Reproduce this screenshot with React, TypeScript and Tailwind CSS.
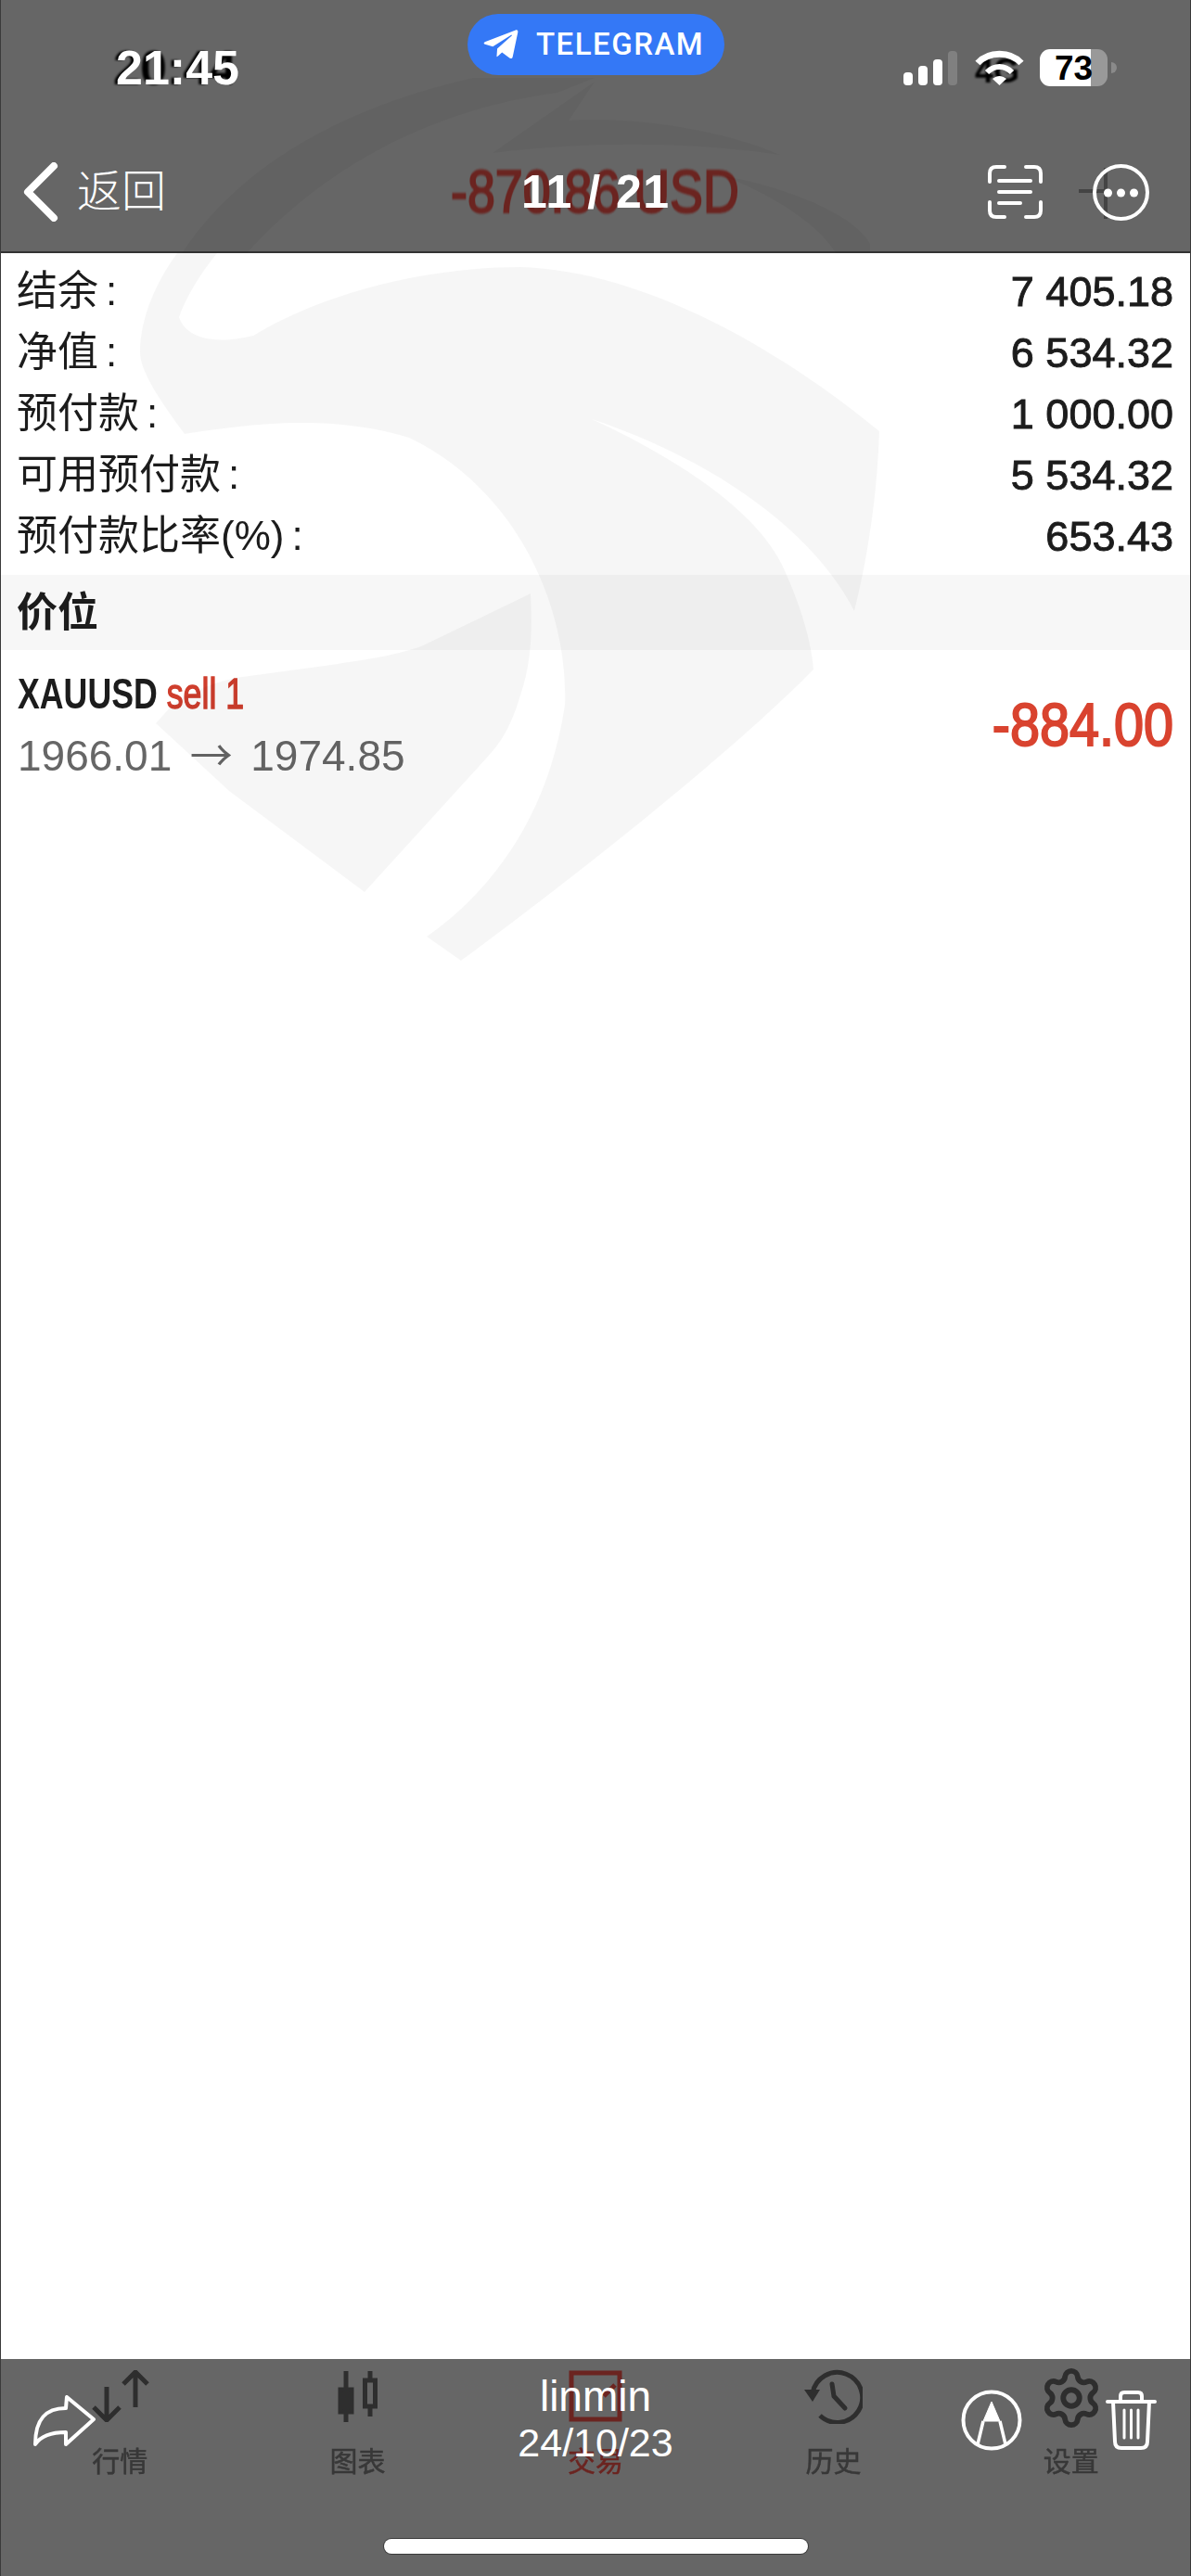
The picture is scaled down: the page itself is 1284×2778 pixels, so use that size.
import { Settings } from "lucide-react";
import { FaTelegramPlane } from "react-icons/fa";

const ROWS = [
  { label: "结余", value: "7 405.18" },
  { label: "净值", value: "6 534.32" },
  { label: "预付款", value: "1 000.00" },
  { label: "可用预付款", value: "5 534.32" },
  { label: "预付款比率(%)", value: "653.43" },
];

// faint logo stamped over the whole screenshot
const Watermark = () => (
  <svg className="absolute left-0 top-0 pointer-events-none" width="1284" height="1100" viewBox="0 0 1284 1100">
    <g fill="#000" fillOpacity="0.035">
      <path d="M233 273 C215 295 200 320 192 342 C200 365 230 372 272 362 C340 320 450 288 560 288 C700 292 850 385 947 465 C945 530 935 600 920 659 C880 580 780 500 637 452 C720 490 820 550 847 620 C865 660 875 700 876 722 C800 800 640 930 496 1036 L459 1010 C530 960 590 880 608 760 C612 660 560 530 440 472 C360 448 280 455 198 468 C170 430 150 400 150 380 C150 340 170 300 190 273 Z" />
      <path d="M571 640 C573 680 572 715 560 750 C548 790 535 805 524 817 L392 962 L246 853 L167 780 L185 760 C210 742 240 733 260 730 L356 717 C400 710 420 708 453 697 Z" />
      <path d="M195 273 C250 190 350 120 509 84 L640 84 L600 100 C450 120 340 190 265 273 Z" />
      <path d="M640 88 L612 130 C680 125 780 140 840 167 C760 155 650 150 530 165 Z" />
      <path d="M780 190 C840 200 920 230 937 263 L937 273 L900 273 C880 240 830 210 780 190 Z" />
    </g>
  </svg>
);

const StatusBar = () => (
  <div className="flex h-[146px] items-start">
    <div className="relative ml-[124px] mt-[46px] w-[130px] text-[52px] font-bold leading-[54px] text-white">
      <span aria-hidden className="absolute left-[-3px] top-0 text-black blur-[1px]">
        20:44
      </span>
      <span className="relative">21:45</span>
    </div>
    <div className="ml-[249px] mt-[15px] flex h-[66px] w-[277px] items-center gap-[17px] rounded-full bg-[#3478f6] pl-[15px]">
      <FaTelegramPlane size={42} color="#fff" />
      <span className="font-['Roboto',sans-serif] text-[33px] font-medium tracking-[1.5px] text-white">TELEGRAM</span>
    </div>
    <div className="ml-[193px] mt-[53px] flex items-center">
      <div className="flex h-[38px] items-end gap-[6px]">
        <div className="h-[14px] w-[10px] rounded-[4px] bg-white" />
        <div className="h-[21px] w-[10px] rounded-[4px] bg-white" />
        <div className="h-[28px] w-[10px] rounded-[4px] bg-white" />
        <div className="h-[37px] w-[10px] rounded-[4px] bg-[#808080]" />
      </div>
      <div className="relative ml-[19px] h-[38px] w-[53px]">
        <span aria-hidden className="absolute left-[0px] top-[6px] text-[36px] font-bold leading-[34px] text-black blur-[1px]">
          4G
        </span>
        <svg className="absolute left-0 top-0" width="53" height="38" viewBox="0 0 53 38" fill="none" stroke="#fff" strokeLinecap="butt">
          <path d="M3 14 C15 1 38 1 50 14" strokeWidth="7" />
          <path d="M13 24 C21 16 32 16 40 24" strokeWidth="6" />
          <path d="M19 31 L26.5 38 L34 31 C29 27 24 27 19 31 Z" fill="#fff" stroke="none" />
        </svg>
      </div>
      <div className="ml-[17px] flex h-[40px] w-[73px] items-center justify-center rounded-[11px] bg-[linear-gradient(90deg,#fff_75%,#999_75%)] text-[37px] font-bold leading-none text-black">
        73
      </div>
      <div className="ml-[4px] h-[12px] w-[6px] rounded-r-full bg-[#8a8a8a]" />
    </div>
  </div>
);

const NavBar = () => (
  <div className="relative flex h-[122px] items-center">
    <svg className="ml-[24px]" width="38" height="64" viewBox="0 0 38 64" fill="none" stroke="#fff" strokeWidth="8" strokeLinecap="round" strokeLinejoin="round">
      <path d="M33 4 L5 32 L33 60" />
    </svg>
    <span className="ml-[20px] text-[48px] font-light leading-none text-white">返回</span>
    <span className="absolute left-[485px] top-[20px] origin-left scale-x-[0.84] whitespace-nowrap text-[64px] leading-[82px] text-[#6b2420] [-webkit-text-stroke:2px_#6b2420] blur-[0.8px]">
      -870.86 USD
    </span>
    <span className="absolute left-[561px] top-[32px] text-[50px] font-bold leading-[58px] tracking-[1.5px] text-white">
      11 / 21
    </span>
    <svg className="ml-auto" width="59" height="58" viewBox="0 0 59 58" fill="none" stroke="#fff" strokeWidth="4" strokeLinecap="round">
      <path d="M18 2 H9 Q2 2 2 9 V18" />
      <path d="M41 2 H50 Q57 2 57 9 V18" />
      <path d="M18 56 H9 Q2 56 2 49 V40" />
      <path d="M41 56 H50 Q57 56 57 49 V40" />
      <path d="M12 17 H46" />
      <path d="M12 29 H46" />
      <path d="M12 41 H35" />
    </svg>
    <svg className="ml-[35px] mr-[40px]" width="84" height="65" viewBox="1160 174 84 65" fill="none">
      <path d="M1164 205 H1193 M1193 180 V235" stroke="#444" strokeWidth="4" />
      <circle cx="1209.5" cy="206.5" r="28.5" stroke="#fff" strokeWidth="4" />
      <circle cx="1195.5" cy="207" r="4.5" fill="#fff" />
      <circle cx="1209.5" cy="207" r="4.5" fill="#fff" />
      <circle cx="1223.5" cy="207" r="4.5" fill="#fff" />
    </svg>
  </div>
);

const BottomTabs = () => (
  <div className="grid grid-cols-5 pt-[12px] text-[30px] leading-[40px] text-[#383838]">
    <div className="flex flex-col items-center">
      <svg width="64" height="56" viewBox="0 0 64 56" fill="none" stroke="#2e2e2e" strokeWidth="5">
        <path d="M18 18 V53 M4 40 L18 54 L32 40" />
        <path d="M49 40 V3 M36 15 L49 2 L62 15" />
      </svg>
      <span className="mt-[23px] [-webkit-text-stroke:0.5px] blur-[0.7px]">行情</span>
    </div>
    <div className="flex flex-col items-center">
      <svg width="44" height="56" viewBox="0 0 44 56" fill="none" stroke="#2e2e2e" strokeWidth="5">
        <path d="M9 1 V56 M35 1 V50" />
        <rect x="3" y="21" width="12" height="24" fill="#2e2e2e" />
        <rect x="29.5" y="11" width="11" height="28" fill="#666" />
      </svg>
      <span className="mt-[23px] [-webkit-text-stroke:0.5px] blur-[0.7px]">图表</span>
    </div>
    <div className="flex flex-col items-center text-[#6b2420]">
      <svg width="58" height="56" viewBox="0 0 58 56" fill="none" stroke="#6b2420" strokeWidth="5">
        <rect x="3" y="3" width="52" height="50" />
        <path d="M38 28 L50 16" />
      </svg>
      <span className="mt-[23px] [-webkit-text-stroke:0.5px] blur-[0.7px]">交易</span>
    </div>
    <div className="flex flex-col items-center">
      <svg className="mt-[-2px]" width="64" height="60" viewBox="0 0 64 60" fill="none" stroke="#2e2e2e" strokeWidth="5">
        <path d="M10 27 A27 27 0 1 1 18 51" />
        <path d="M1 23 H18 L10 36 Z" fill="#2e2e2e" stroke="none" />
        <path d="M31 17 L33 30 L45 43" strokeLinecap="round" />
      </svg>
      <span className="mt-[21px] [-webkit-text-stroke:0.5px] blur-[0.7px]">历史</span>
    </div>
    <div className="flex flex-col items-center">
      <Settings className="mt-[-5px]" size={70} color="#2e2e2e" strokeWidth={2} />
      <span className="mt-[14px] [-webkit-text-stroke:0.5px] blur-[0.7px]">设置</span>
    </div>
  </div>
);

// viewer controls laid over the screenshot's tab bar
const BottomOverlay = () => (
  <>
    <svg className="absolute left-[35px] top-[39px]" width="67" height="56" viewBox="0 0 67 56" fill="none" stroke="#fff" strokeWidth="4" strokeLinejoin="round">
      <path d="M65 26 L36 2 L35 14 C14 14 2 25 2 53 C8 44 18 40 35 40 L35 53 Z" />
    </svg>
    <div className="absolute left-0 right-0 top-[12px] flex flex-col items-center text-white">
      <span className="text-[46px] leading-[56px]">linmin</span>
      <span className="text-[43px] leading-[44px]">24/10/23</span>
    </div>
    <svg className="absolute left-[1034px] top-[32px]" width="68" height="68" viewBox="0 0 68 68" fill="none" stroke="#fff">
      <circle cx="34" cy="34" r="30.5" strokeWidth="4" />
      <path d="M34 14 L25 35 H43 Z" fill="#fff" strokeWidth="1" />
      <path d="M25 35 L19 60 M43 35 L49 60" strokeWidth="3.5" />
    </svg>
    <svg className="absolute left-[1191px] top-[33px]" width="55" height="66" viewBox="0 0 55 66" fill="none" stroke="#fff" strokeLinecap="round" strokeLinejoin="round">
      <path d="M2 13 H53" strokeWidth="4" />
      <path d="M16 13 V7 Q16 3 20 3 H35 Q39 3 39 7 V13" strokeWidth="4" />
      <path d="M8 13 L10 56 Q10 63 17 63 H38 Q45 63 45 56 L47 13" strokeWidth="4" />
      <path d="M20 22 V52 M27.5 22 V52 M35 22 V52" strokeWidth="3" />
    </svg>
  </>
);

export default function App() {
  return (
    <div className="relative flex h-[2778px] w-[1284px] flex-col overflow-hidden border-x border-[#3a3a3a] bg-white font-['Liberation_Sans','Noto_Sans_CJK_SC',sans-serif]">
      <header className="h-[273px] shrink-0 border-b-2 border-[#333] bg-[#666]">
        <StatusBar />
        <NavBar />
      </header>

      <main className="flex-1">
        <div className="pt-[8px]">
          {ROWS.map((row) => (
            <div key={row.label} className="flex h-[66px] items-center justify-between pl-[17px] pr-[18px] text-[#1c1c1c]">
              <span className="text-[44px] leading-none blur-[0.5px]">
                {row.label}
                <span className="ml-[8px]">:</span>
              </span>
              <span className="text-[45px] leading-none [-webkit-text-stroke:0.9px] blur-[0.4px]">{row.value}</span>
            </div>
          ))}
        </div>
        <div className="mt-[9px] flex h-[81px] items-center bg-[#f7f7f7] pl-[17px] text-[44px] font-bold leading-none text-[#1c1c1c] blur-[0.3px]">
          价位
        </div>
        <div className="flex items-center justify-between pl-[18px] pr-[18px] pt-[21px]">
          <div>
            <div className="origin-left scale-x-[0.76] whitespace-nowrap text-[47px] font-bold leading-[52px] text-[#1c1c1c] blur-[0.5px]">
              XAUUSD <span className="font-normal text-[#cf3e2d] [-webkit-text-stroke:1.4px_#cf3e2d]">sell 1</span>
            </div>
            <div className="mt-[14px] whitespace-nowrap text-[46px] leading-[54px] text-[#666] blur-[0.5px]">
              1966.01
              <span className="inline-block w-[85px] text-center font-['Noto_Sans_CJK_SC'] leading-none">→</span>
              1974.85
            </div>
          </div>
          <div className="origin-right scale-x-[0.9] text-[64px] leading-none text-[#d9432f] [-webkit-text-stroke:2px_#d9432f] blur-[0.5px]">
            -884.00
          </div>
        </div>
      </main>

      <footer className="relative flex h-[234px] shrink-0 flex-col bg-[#666]">
        <BottomTabs />
        <BottomOverlay />
        <div className="mx-auto mb-[24px] mt-auto h-[16px] w-[457px] rounded-full bg-white shadow-[0_0_0_1px_#3a3a3a]" />
      </footer>

      <Watermark />
    </div>
  );
}
